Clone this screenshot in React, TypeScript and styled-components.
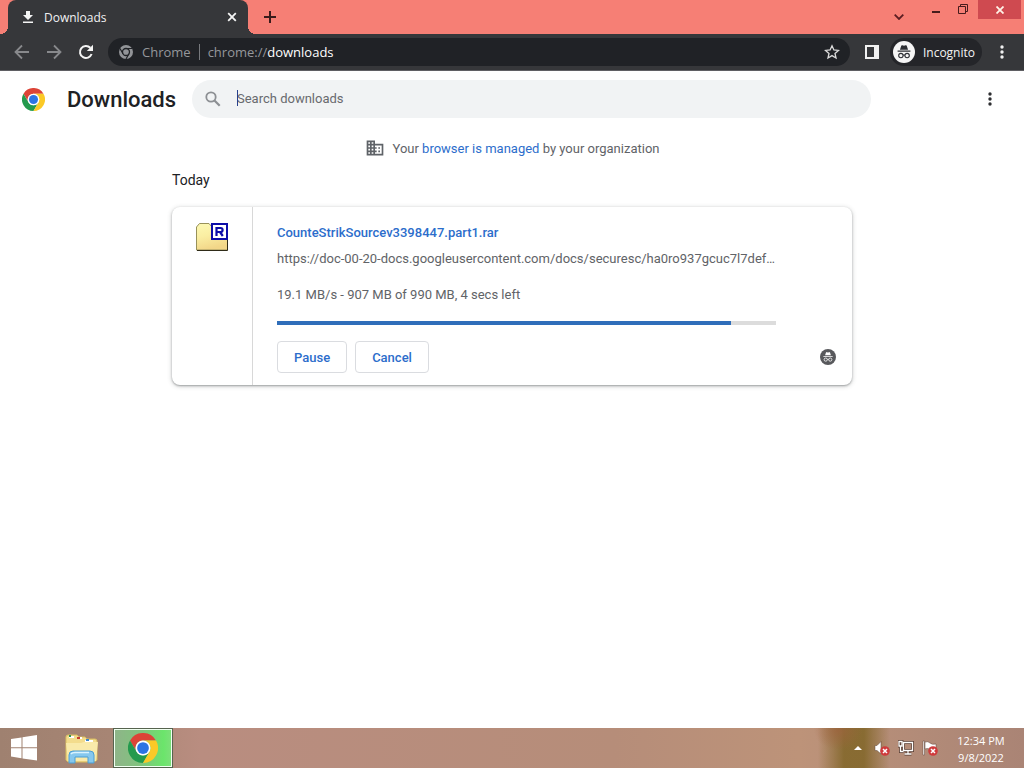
import React from "react";
import styled, { createGlobalStyle } from "styled-components";

const ui = '"Open Sans", "Noto Sans", sans-serif';

const GlobalStyle = createGlobalStyle`
  *, *::before, *::after { box-sizing: border-box; }
  body { margin: 0; background: #fff; font-family: Roboto, sans-serif; font-size: 13px; color: #202124; }
  button, input { font: inherit; }
  button { border: 0; padding: 0; background: none; color: inherit; cursor: pointer; }
  svg { display: block; flex: none; }
`;

const Screen = styled.div`
  min-height: 100vh;
  display: flex;
  flex-direction: column;
`;

const TabStrip = styled.header`
  display: flex;
  height: 34px;
  padding-left: 8px;
  background: #f67f75;
  font-family: ${ui};
`;

const Tab = styled.div`
  position: relative;
  display: flex;
  align-items: center;
  gap: 8px;
  width: 240px;
  padding: 0 8px 0 12px;
  border-radius: 8px 8px 0 0;
  background: #36373a;
  color: #f1f1f2;
  font-size: 12px;

  &::before, &::after {
    content: "";
    position: absolute;
    bottom: 0;
    width: 8px;
    height: 8px;
  }
  &::before { right: 100%; background: radial-gradient(circle at 0 0, transparent 8px, #36373a 8px); }
  &::after { left: 100%; background: radial-gradient(circle at 100% 0, transparent 8px, #36373a 8px); }
`;

const TabTitle = styled.span`
  flex: 1;
`;

const IconButton = styled.button<{ $w?: number; $h?: number }>`
  display: flex;
  align-items: center;
  justify-content: center;
  flex: none;
  width: ${(p) => p.$w ?? 16}px;
  height: ${(p) => p.$h ?? 16}px;
`;

const NewTab = styled(IconButton)`
  margin-left: 8px;
`;

const WindowControls = styled.div`
  display: flex;
  margin-left: auto;
  padding-right: 3px;
`;

const CloseWindow = styled(IconButton)`
  margin-left: 2px;
  background: #cf4a50;
`;

const Toolbar = styled.nav`
  display: flex;
  align-items: center;
  height: 37px;
  padding: 0 12px 0 6px;
  background: #36373a;
  border-bottom: 1px solid #5f5f63;
  color: #f1f1f2;
  font-family: ${ui};
`;

const Omnibox = styled.div`
  display: flex;
  align-items: center;
  flex: 1;
  height: 28px;
  margin: 0 4px 0 6px;
  padding: 0 10px;
  border-radius: 14px;
  background: #202226;
  color: #95979b;
  font-size: 13px;
`;

const SiteChip = styled.span`
  margin-right: 8px;
  padding: 0 8px;
  border-right: 1px solid #77797d;
  line-height: 16px;
`;

const UrlInput = styled.input`
  flex: 1;
  min-width: 0;
  padding: 0;
  border: 0;
  outline: 0;
  background: none;
  color: #fff;
`;

const Profile = styled.button`
  display: flex;
  align-items: center;
  gap: 8px;
  height: 28px;
  margin-right: 10px;
  padding: 0 7px 0 3px;
  border-radius: 14px;
  background: #242529;
  color: #f4f4f4;
  font-size: 12px;
`;

const PageHeader = styled.div`
  display: flex;
  align-items: center;
  height: 56px;
  padding: 0 26px 0 22px;
`;

const Title = styled.h1`
  width: 125px;
  margin: 0 0 0 22px;
  padding-top: 2px;
  font-size: 22px;
  font-weight: 500;
  line-height: 28px;
`;

const SearchBox = styled.label`
  display: flex;
  align-items: center;
  gap: 14px;
  flex: 1;
  max-width: 679px;
  height: 38px;
  padding: 0 11px;
  border-radius: 19px;
  background: #f1f3f4;
`;

const SearchInput = styled.input`
  flex: 1;
  min-width: 0;
  height: 16px;
  margin-bottom: 2px;
  padding: 0;
  border: 0;
  border-left: 1px solid #27418c;
  outline: 0;
  background: none;
  text-indent: -1px;
  &::placeholder { color: #686a6e; opacity: 1; }
`;

const PageMenu = styled(IconButton)`
  margin-left: auto;
`;

const Main = styled.main`
  flex: 1;
  width: 100%;
  max-width: 680px;
  margin: 0 auto;
`;

const Managed = styled.p`
  display: flex;
  align-items: center;
  justify-content: center;
  gap: 8px;
  height: 20px;
  margin: 11px 0 12px;
  color: #5f6368;
`;

const Link = styled.a`
  color: #2c6dcb;
  text-decoration: none;
`;

const DateHeading = styled.h2`
  margin: 0 0 17px;
  font-size: 14px;
  font-weight: 400;
  line-height: 20px;
`;

const Card = styled.article`
  display: flex;
  border-radius: 8px;
  background: #fff;
  box-shadow: 0 1px 2px rgba(60, 64, 67, 0.4), 0 1px 4px 1px rgba(60, 64, 67, 0.18);
`;

const FileIconCell = styled.div`
  width: 81px;
  padding: 15px 0 0 24px;
  border-right: 1px solid #d8d8d8;
`;

const Details = styled.div`
  flex: 1;
  min-width: 0;
  padding: 16px 16px 12px 24px;
`;

const Info = styled.div`
  margin-right: 60px;
`;

const FileName = styled(Link)`
  display: block;
  font-weight: 500;
  line-height: 20px;
`;

const Line = styled.p<{ $gap: number }>`
  margin: ${(p) => p.$gap}px 0 0;
  overflow: hidden;
  white-space: nowrap;
  text-overflow: ellipsis;
  line-height: 20px;
  color: #616367;
`;

const Progress = styled.progress`
  display: block;
  width: 100%;
  height: 4px;
  margin: 16px 0;
  appearance: none;
  border: 0;
  &::-webkit-progress-bar { background: #dcdcdc; }
  &::-webkit-progress-value { background: #2f6eba; }
`;

const Actions = styled.div`
  display: flex;
  align-items: center;
  gap: 8px;
`;

const ActionButton = styled.button`
  height: 32px;
  padding: 0 16px;
  border: 1px solid #dadce0;
  border-radius: 4px;
  color: #2c6dcb;
  font-weight: 500;
`;

const Badge = styled.span`
  margin-left: auto;
`;

const Taskbar = styled.footer`
  display: flex;
  height: 40px;
  background:
    radial-gradient(ellipse 24px 20px at 838px 2px, rgba(158, 98, 62, 0.7), rgba(158, 98, 62, 0)),
    linear-gradient(90deg, transparent 818px, rgba(128, 101, 38, 0.85) 844px, rgba(128, 101, 38, 0.85) 864px, transparent 890px),
    linear-gradient(90deg, #9f8170 0, #a78574 110px, #b98d80 200px, #b68d79 60%, #bd9379 78%, #b28b78 90%, #aa8475 100%);
  color: #fff;
  font-family: ${ui};
`;

const TaskButton = styled.button<{ $active?: boolean }>`
  display: flex;
  align-items: center;
  justify-content: center;
  width: ${(p) => (p.$active ? 60 : 48)}px;
  border: ${(p) => (p.$active ? "1px solid #56634f" : "0")};
  background: ${(p) => (p.$active ? "linear-gradient(90deg, #8fb489, #7fc57c 50%, #6be56b 85%, #7fdf7c)" : "none")};
  box-shadow: ${(p) => (p.$active ? "inset 0 0 0 1px #f0fff0" : "none")};
`;

const Explorer = styled(TaskButton)`
  margin: 0 7px 0 10px;
  padding-top: 2px;
`;

const Tray = styled.div`
  display: flex;
  align-items: center;
  gap: 8px;
  margin-left: auto;
  padding-right: 18px;
`;

const Clock = styled.time`
  width: 50px;
  margin-left: 10px;
  padding-top: 2px;
  font-size: 11px;
  line-height: 17px;
  text-align: center;
  white-space: nowrap;
`;

const ChromeLogo = ({ size }: { size: number }) => (
  <svg width={size} height={size} viewBox="0 0 48 48" aria-hidden="true">
    <path fill="#dc4437" d="M3.2 12A24 24 0 0 1 44.8 12H24A12 12 0 0 0 13.6 30Z" />
    <path fill="#249a4e" d="M3.2 12 13.6 30A12 12 0 0 0 34.4 30L24 48A24 24 0 0 1 3.2 12Z" />
    <path fill="#fbc927" d="M44.8 12A24 24 0 0 1 24 48L34.4 30A12 12 0 0 0 24 12Z" />
    <circle cx="24" cy="24" r="12" fill="#fff" />
    <circle cx="24" cy="24" r="9.4" fill="#2c74e4" />
  </svg>
);

const IncognitoIcon = ({ size, disc, ink }: { size: number; disc: string; ink: string }) => (
  <svg width={size} height={size} viewBox="0 0 24 24" aria-hidden="true">
    <circle cx="12" cy="12" r="12" fill={disc} />
    <path fill={ink} d="M7.6 9.5 9 5.2Q9.3 4.4 10.2 4.7L12 5.2 13.8 4.7Q14.7 4.4 15 5.2L16.4 9.5ZM5 10.4H19V11.7H5Z" />
    <g fill="none" stroke={ink} strokeWidth="1.2">
      <circle cx="8.6" cy="15.9" r="2.4" />
      <circle cx="15.4" cy="15.9" r="2.4" />
      <path d="M11 15.6Q12 14.9 13 15.6" />
    </g>
  </svg>
);

const Dots = ({ color }: { color: string }) => (
  <svg width="16" height="16" viewBox="0 0 16 16" fill={color} aria-hidden="true">
    <circle cx="8" cy="3" r="1.7" />
    <circle cx="8" cy="8" r="1.7" />
    <circle cx="8" cy="13" r="1.7" />
  </svg>
);

const Arrow = ({ flip }: { flip?: boolean }) => (
  <svg width="16" height="16" viewBox="0 0 16 16" fill="none" stroke="#88898c" strokeWidth="1.8" aria-hidden="true">
    <path d={flip ? "M1 8H14M8 1.5 14.5 8 8 14.5" : "M15 8H2M8 1.5 1.5 8 8 14.5"} />
  </svg>
);

const FolderIcon = () => (
  <svg width="33" height="30" viewBox="0 0 33 30" aria-hidden="true">
    <defs>
      <linearGradient id="folder" x1="0" y1="0" x2="0.3" y2="1">
        <stop offset="0" stopColor="#fdf9b4" />
        <stop offset="0.5" stopColor="#faeea2" />
        <stop offset="1" stopColor="#f2d688" />
      </linearGradient>
    </defs>
    <path d="M.5 28V5L3.5 1.5H13L16 5H31.5V28Z" fill="url(#folder)" stroke="#98915a" />
    <path d="M1 28.5H31.5V5" fill="none" stroke="#2f2b18" />
    <rect x="16" y="2" width="15" height="15" fill="#fff" stroke="#0d0da8" strokeWidth="2" />
    <path d="M20.5 14V6H24.5Q26.6 6 26.6 8T24.5 10H21M24 10 26.8 14" fill="none" stroke="#0d0da8" strokeWidth="2.2" />
  </svg>
);

const ExplorerIcon = () => (
  <svg width="34" height="30" viewBox="0 0 34 30" aria-hidden="true">
    <path d="M1 3Q1 1 3 1H12L14 3H20L22 5H30Q32 5 32 7V26L29 28H3L1 26Z" fill="#f3dc8c" stroke="#d9bd62" />
    <path d="M4 3H9M12 4H17M20 7H28" stroke="#fff" strokeWidth="2" />
    <path d="M4 2H6" stroke="#2f9454" strokeWidth="2" />
    <path d="M12 4H15" stroke="#c8402e" strokeWidth="2" />
    <path d="M21 6H24" stroke="#3e86ca" strokeWidth="2" />
    <path d="M1 9H16L19 8H33L31 27H3Z" fill="#f9eaaa" />
    <path d="M4 29V21Q4 17 8 17H25Q29 17 29 21V29H23V23H10V29Z" fill="#86c8ee" stroke="#4a9ed4" />
    <path d="M6 20Q7 18.500 10 18.500H24" fill="none" stroke="#d9f3ff" strokeWidth="1.500" />
  </svg>
);

const RedCross = ({ x, y }: { x: number; y: number }) => (
  <g transform={`translate(${x} ${y})`}>
    <circle r="4.8" fill="#cf3b3c" />
    <path d="M-2-2 2 2M2-2-2 2" stroke="#fff" strokeWidth="1.5" />
  </g>
);

export default function App() {
  return (
    <Screen>
      <GlobalStyle />
      <TabStrip>
        <Tab>
          <svg width="16" height="16" viewBox="0 0 16 16" fill="#f5f5f5" aria-hidden="true">
            <path d="M6 2H10V6H13L8 11 3 6H6ZM3 12.500H13V14H3Z" />
          </svg>
          <TabTitle>Downloads</TabTitle>
          <IconButton aria-label="Close tab">
            <svg width="10" height="10" viewBox="0 0 10 10" stroke="#f5f5f5" strokeWidth="1.800" aria-hidden="true">
              <path d="M1.200 1.200 8.800 8.800M8.800 1.200 1.200 8.800" />
            </svg>
          </IconButton>
        </Tab>
        <NewTab $w={28} $h={34} aria-label="New tab">
          <svg width="12" height="12" viewBox="0 0 12 12" stroke="#3a1b1b" strokeWidth="2" aria-hidden="true">
            <path d="M6 0V12M0 6H12" />
          </svg>
        </NewTab>
        <WindowControls>
          <IconButton $w={46} $h={34} aria-label="Search tabs">
            <svg width="10" height="6" viewBox="0 0 10 6" fill="none" stroke="#5b1d22" strokeWidth="1.800" aria-hidden="true">
              <path d="M.7.7 5 5 9.300.7" />
            </svg>
          </IconButton>
          <IconButton $w={28} $h={24} aria-label="Minimize">
            <svg width="8" height="2" aria-hidden="true">
              <path d="M0 0H8V2H0Z" fill="#451c1c" />
            </svg>
          </IconButton>
          <IconButton $w={26} $h={18} aria-label="Restore">
            <svg width="10" height="10" viewBox="0 0 10 10" fill="none" stroke="#451c1c" aria-hidden="true">
              <path d="M.5 2.500H7.500V9.500H.5ZM2.500 2.500V.5H9.500V7.500H7.500" />
            </svg>
          </IconButton>
          <CloseWindow $w={43} $h={19} aria-label="Close window">
            <svg width="8" height="8" viewBox="0 0 8 8" stroke="#fff3e8" strokeWidth="1.800" aria-hidden="true">
              <path d="M.5.5 7.500 7.500M7.500.5.5 7.500" />
            </svg>
          </CloseWindow>
        </WindowControls>
      </TabStrip>

      <Toolbar>
        <IconButton $w={32} $h={28} aria-label="Back"><Arrow /></IconButton>
        <IconButton $w={32} $h={28} aria-label="Forward"><Arrow flip /></IconButton>
        <IconButton $w={32} $h={28} aria-label="Reload">
          <svg width="16" height="16" viewBox="0 0 16 16" aria-hidden="true">
            <path d="M13.600 10A6 6 0 1 1 12.300 3.800" fill="none" stroke="#f5f5f5" strokeWidth="2" />
            <path d="M15 .8V7H8.800Z" fill="#f5f5f5" />
          </svg>
        </IconButton>
        <Omnibox>
          <svg width="16" height="16" viewBox="0 0 16 16" fill="none" aria-hidden="true">
            <circle cx="8" cy="8" r="7" fill="#929498" />
            <circle cx="8" cy="8" r="3.500" stroke="#202226" strokeWidth="1.300" />
            <path d="M8 4.500H14M5 9.700 2 4.500M11 9.700 8 15" stroke="#202226" strokeWidth="1.200" />
          </svg>
          <SiteChip>Chrome</SiteChip>
          <span>chrome://</span>
          <UrlInput aria-label="Address" defaultValue="downloads" />
          <IconButton aria-label="Bookmark this page">
            <svg width="16" height="16" viewBox="0 0 16 16" fill="none" stroke="#dcdcdc" strokeWidth="1.300" aria-hidden="true">
              <path d="M8 1.800 9.900 6 14.500 6.400 11 9.500 12 14 8 11.600 4 14 5 9.500 1.500 6.400 6.100 6Z" />
            </svg>
          </IconButton>
        </Omnibox>
        <IconButton $w={36} $h={28} aria-label="Side panel">
          <svg width="14" height="14" viewBox="0 0 14 14" fill="none" aria-hidden="true">
            <path d="M1 1H13V13H1Z" stroke="#f1f1f1" strokeWidth="2" />
            <path d="M9 1H13V13H9Z" fill="#f1f1f1" />
          </svg>
        </IconButton>
        <Profile>
          <IncognitoIcon size={22} disc="#f5f5f5" ink="#2c2e33" />
          Incognito
        </Profile>
        <IconButton $w={20} $h={28} aria-label="Customize and control"><Dots color="#f1f1f1" /></IconButton>
      </Toolbar>

      <PageHeader>
        <ChromeLogo size={23} />
        <Title>Downloads</Title>
        <SearchBox>
          <svg width="20" height="20" viewBox="0 0 20 20" fill="none" stroke="#8c8f93" aria-hidden="true">
            <circle cx="8" cy="8" r="4.700" strokeWidth="1.800" />
            <path d="M11.500 11.500 16.700 16.700" strokeWidth="2.200" />
          </svg>
          <SearchInput aria-label="Search downloads" placeholder="Search downloads" />
        </SearchBox>
        <PageMenu aria-label="More actions"><Dots color="#2d2e31" /></PageMenu>
      </PageHeader>

      <Main>
        <Managed>
          <svg width="20" height="20" viewBox="0 0 24 24" fill="#5f6368" aria-hidden="true">
            <path d="M12 7V3H2v18h20V7H12zM6 19H4v-2h2v2zm0-4H4v-2h2v2zm0-4H4V9h2v2zm0-4H4V5h2v2zm4 12H8v-2h2v2zm0-4H8v-2h2v2zm0-4H8V9h2v2zm0-4H8V5h2v2zm10 12h-8v-2h2v-2h-2v-2h2v-2h-2V9h8v10zm-2-8h-2v2h2v-2zm0 4h-2v2h2v-2z" />
          </svg>
          <span>Your <Link href="#managed">browser is managed</Link> by your organization</span>
        </Managed>
        <DateHeading>Today</DateHeading>
        <Card>
          <FileIconCell><FolderIcon /></FileIconCell>
          <Details>
            <Info>
              <FileName href="#file">CounteStrikSourcev3398447.part1.rar</FileName>
              <Line $gap={6}>https://doc-00-20-docs.googleusercontent.com/docs/securesc/ha0ro937gcuc7l7def…</Line>
              <Line $gap={16}>19.1 MB/s - 907 MB of 990 MB, 4 secs left</Line>
              <Progress value={91} max={100} aria-label="Download progress" />
            </Info>
            <Actions>
              <ActionButton>Pause</ActionButton>
              <ActionButton>Cancel</ActionButton>
              <Badge><IncognitoIcon size={16} disc="#58595c" ink="#fff" /></Badge>
            </Actions>
          </Details>
        </Card>
      </Main>

      <Taskbar>
        <TaskButton aria-label="Start">
          <svg width="28" height="28" viewBox="0 0 28 28" fill="#fff" aria-hidden="true">
            <path d="M1 5 11.500 3.400V13.300H1ZM12.500 3.200 27 1V13.300H12.500ZM1 14.300H11.500V24.200L1 22.600ZM12.500 14.300H27V26.600L12.500 24.400Z" />
          </svg>
        </TaskButton>
        <Explorer aria-label="File Explorer"><ExplorerIcon /></Explorer>
        <TaskButton $active aria-label="Google Chrome"><ChromeLogo size={30} /></TaskButton>
        <Tray>
          <IconButton aria-label="Show hidden icons">
            <svg width="8" height="4" viewBox="0 0 8 4" fill="#fff" aria-hidden="true"><path d="M0 4 4 0 8 4Z" /></svg>
          </IconButton>
          <IconButton aria-label="Volume muted">
            <svg width="16" height="16" viewBox="0 0 16 16" aria-hidden="true">
              <path d="M1 5.500H3L7 1.500V14L3 10.500H1Z" fill="#fff" stroke="#5d4337" strokeWidth=".5" />
              <RedCross x={11} y={11} />
            </svg>
          </IconButton>
          <IconButton aria-label="Network">
            <svg width="16" height="16" viewBox="0 0 16 16" fill="none" aria-hidden="true">
              <path d="M5.500 2.500H14.500V10.500H5.500ZM10 10.500V14M6.500 14H13.500M2.500 6V11.500H5.500M1 1.500H4V6H1Z" stroke="#54392e" strokeWidth="2.800" />
              <path d="M5.500 2.500H14.500V10.500H5.500ZM10 10.500V14M6.500 14H13.500M2.500 6V11.500H5.500M1 1.500H4V6H1Z" stroke="#fff" strokeWidth="1.300" />
            </svg>
          </IconButton>
          <IconButton aria-label="Action Center">
            <svg width="16" height="16" viewBox="0 0 16 16" aria-hidden="true">
              <path d="M1 1H2.500V15H1ZM3 2Q6 1 8 3T14 4V10Q11 10 8 9T3 9Z" fill="#fff" stroke="#5d4337" strokeWidth=".5" />
              <RedCross x={11} y={11} />
            </svg>
          </IconButton>
          <Clock>12:34 PM<br />9/8/2022</Clock>
        </Tray>
      </Taskbar>
    </Screen>
  );
}
